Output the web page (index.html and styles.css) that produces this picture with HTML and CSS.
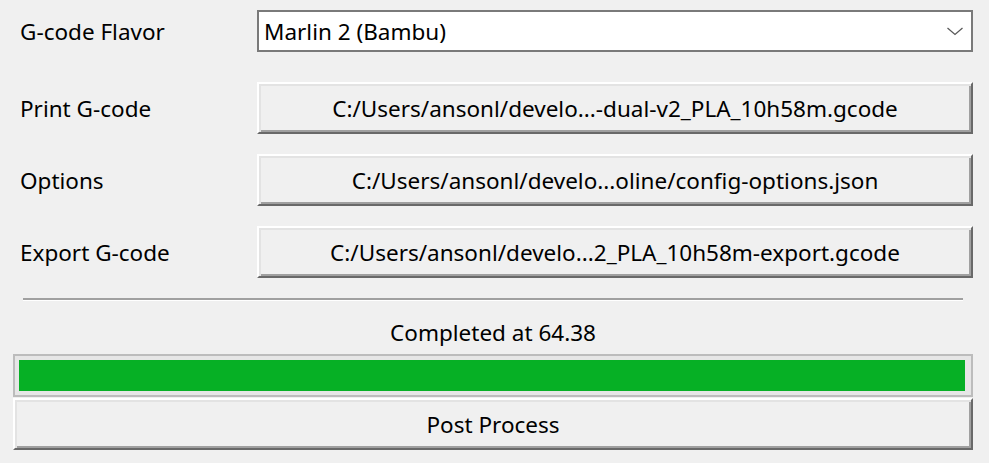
FILE: index.html
```html
<!DOCTYPE html>
<html>
<head>
<meta charset="utf-8">
<link rel="stylesheet" href="styles.css">
</head>
<body>
<div class="panel">
  <div class="row row-combo">
    <div class="label">G-code Flavor</div>
    <div class="combo">
      <span class="combo-text">Marlin 2 (Bambu)</span>
      <svg class="chevron" width="16" height="9" viewBox="0 0 16 9"><polyline points="0.5,1 8,7.5 15.5,1" fill="none" stroke="#5a5a5a" stroke-width="1.3"/></svg>
    </div>
  </div>
  <div class="row">
    <div class="label">Print G-code</div>
    <div class="btn">C:/Users/ansonl/develo...-dual-v2_PLA_10h58m.gcode</div>
  </div>
  <div class="row">
    <div class="label">Options</div>
    <div class="btn">C:/Users/ansonl/develo...oline/config-options.json</div>
  </div>
  <div class="row">
    <div class="label">Export G-code</div>
    <div class="btn">C:/Users/ansonl/develo...2_PLA_10h58m-export.gcode</div>
  </div>
  <div class="separator"></div>
  <div class="status">Completed at 64.38</div>
  <div class="progress"><div class="progress-fill" style="width:100%"></div></div>
  <div class="btn btn-wide">Post Process</div>
</div>
</body>
</html>
```
FILE: styles.css
```css
html, body {
  margin: 0;
  padding: 0;
  background: #f0f0f0;
}
body {
  font-family: "Noto Sans", "Open Sans", sans-serif;
  font-size: 22.5px;
  color: #000;
  width: 989px;
  height: 463px;
  overflow: hidden;
}
.panel {
  padding: 10px 16px 0 13px;
  display: flex;
  flex-direction: column;
}
.row {
  display: flex;
  align-items: center;
  height: 52px;
  margin-bottom: 20px;
}
.row-combo {
  height: 42px;
  margin-bottom: 30px;
}
.label {
  width: 237px;
  padding-left: 7px;
  flex: none;
}
.combo {
  flex: 1;
  height: 42px;
  box-sizing: border-box;
  border: 2px solid #7a7a7a;
  background: #fff;
  display: flex;
  align-items: center;
  justify-content: space-between;
  padding: 0 8px 0 5px;
}
.chevron {
  display: block;
}
.btn {
  flex: 1;
  height: 52px;
  box-sizing: border-box;
  border: 2px solid;
  border-color: #ffffff #696969 #696969 #ffffff;
  box-shadow: inset 2px 2px 0 #e3e3e3, inset -2px -2px 0 #a0a0a0;
  background: #f0f0f0;
  display: flex;
  align-items: center;
  justify-content: center;
  white-space: nowrap;
}
.separator {
  height: 2px;
  background: #a0a0a0;
  border-bottom: 1px solid #ffffff;
  margin: 0 10px;
}
.status {
  text-align: center;
  line-height: 24px;
  padding: 20px 0 9px;
}
.progress {
  height: 43px;
  box-sizing: border-box;
  border: 2px solid #bcbcbc;
  background: #e6e6e6;
  padding: 4px 6px 4px 4px;
}
.progress-fill {
  height: 100%;
  background: #06b025;
}
.btn-wide {
  flex: none;
  margin-top: 1px;
}
```
